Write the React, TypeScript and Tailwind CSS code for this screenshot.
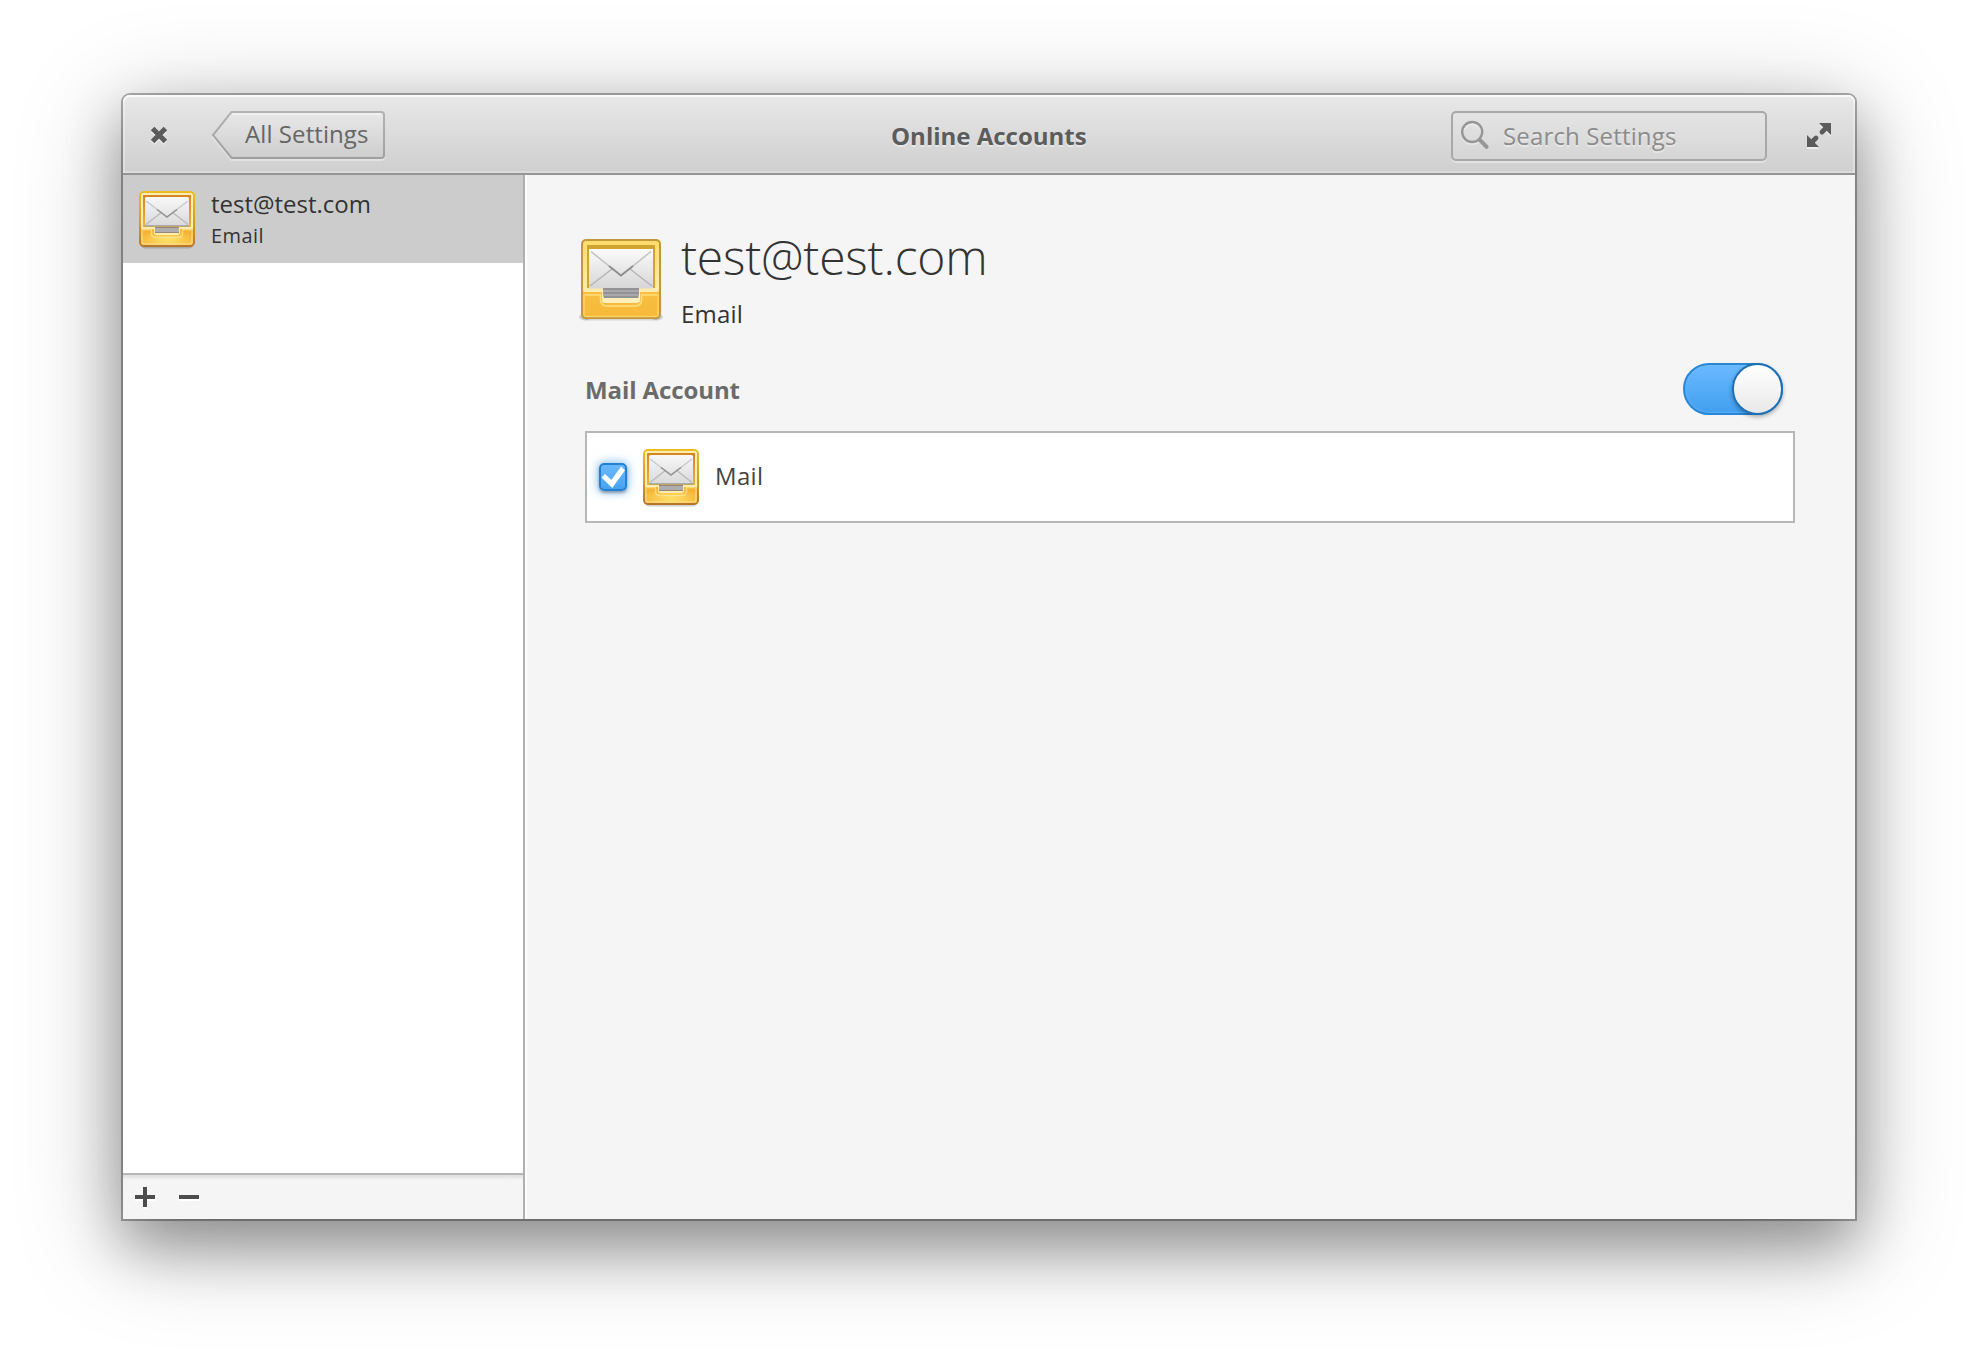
import React from "react";

function SmallMailIcon({ id }: { id: string }) {
  return (
    <svg width="64" height="64" viewBox="0 0 64 64" className="block shrink-0">
      <defs>
        <linearGradient id={id + "b"} x1="0" y1="0" x2="0" y2="1">
          <stop offset="0" stopColor="#eebb20" />
          <stop offset="0.6" stopColor="#d79a1c" />
          <stop offset="1" stopColor="#b8742a" />
        </linearGradient>
        <linearGradient id={id + "w"} x1="0" y1="0" x2="0" y2="1">
          <stop offset="0" stopColor="#d78420" />
          <stop offset="1" stopColor="#e8b33c" />
        </linearGradient>
        <radialGradient id={id + "f"} cx="0.5" cy="0.7" r="0.6">
          <stop offset="0" stopColor="#ffe16b" />
          <stop offset="1" stopColor="#f6b333" />
        </radialGradient>
        <linearGradient id={id + "p"} x1="0" y1="0" x2="0" y2="1">
          <stop offset="0" stopColor="#f8f8f8" />
          <stop offset="1" stopColor="#d9d9d9" />
        </linearGradient>
      </defs>
      <rect x="5" y="6" width="54" height="55.5" rx="5" fill="#000" opacity="0.18" />
      <rect x="4" y="4" width="56" height="56" rx="5" fill={`url(#${id}b)`} />
      <rect x="6" y="6" width="52" height="52" rx="3" fill="#f9c440" />
      <rect x="6" y="42" width="52" height="16" rx="2.5" fill={`url(#${id}f)`} />
      <path d="M6 8.500a2.500 2.500 0 0 1 2.500-2.500h47a2.500 2.500 0 0 1 2.500 2.500V42H6z" fill="#ffedb0" />
      <rect x="8" y="8" width="48" height="32" fill={`url(#${id}w)`} />
      <path d="M19 40h26v5a3 3 0 0 1-3 3h-20a3 3 0 0 1-3-3z" fill="#ffedb0" />
      <rect x="10" y="10" width="44" height="29" rx="1.500" fill={`url(#${id}p)`} />
      <path d="M11 37.500 27 25M53 37.500 37 25" stroke="#b9b9b9" strokeWidth="1.300" />
      <path d="m11 14 21 16 21-16" fill="none" stroke="#c9c9c9" strokeWidth="1.300" />
      <path d="m22 22.500 10 7.500 10-7.500" fill="none" stroke="#939393" strokeWidth="1.500" />
      <path d="M10 38.800h44" stroke="#9b9b9b" strokeWidth="1.200" />
      <path d="M20 40h24v6h-24z" fill="#aeaeae" />
      <path d="M20 40h24v1h-24zM20 45h24v1h-24z" fill="#958678" />
      <path d="M8 42.500h8.500v4a4 4 0 0 0 4 4h23a4 4 0 0 0 4-4v-4h8.500" fill="none" stroke="#fff0a8" strokeOpacity="0.6" strokeWidth="1.600" />
      <rect x="7" y="7" width="50" height="50" rx="2.500" fill="none" stroke="#fff3b8" strokeOpacity="0.5" strokeWidth="1.500" />
    </svg>
  );
}

function LargeMailIcon() {
  return (
    <svg width="96" height="96" viewBox="0 0 96 96" className="block shrink-0">
      <defs>
        <linearGradient id="lgf" x1="0" y1="0" x2="0" y2="1">
          <stop offset="0" stopColor="#fbcb4c" />
          <stop offset="1" stopColor="#f7b93a" />
        </linearGradient>
        <linearGradient id="lgt" x1="0" y1="0" x2="0" y2="1">
          <stop offset="0" stopColor="#ffdc6c" />
          <stop offset="1" stopColor="#fff0bf" />
        </linearGradient>
        <linearGradient id="lgp" x1="0" y1="0" x2="0" y2="1">
          <stop offset="0" stopColor="#fbfbfb" />
          <stop offset="1" stopColor="#d6d6d6" />
        </linearGradient>
        <radialGradient id="lgs">
          <stop offset="0" stopColor="#000" stopOpacity="0.45" />
          <stop offset="1" stopColor="#000" stopOpacity="0" />
        </radialGradient>
      </defs>
      <rect x="12" y="87" width="72" height="2.500" fill="#000" opacity="0.12" />
      <ellipse cx="12" cy="86" rx="7" ry="4" fill="url(#lgs)" />
      <ellipse cx="84" cy="86" rx="7" ry="4" fill="url(#lgs)" />
      <rect x="8" y="8" width="80" height="80" rx="5" fill="#c5973c" />
      <rect x="10" y="10" width="76" height="76" rx="3.500" fill="url(#lgf)" />
      <path d="M10 13.500A3.500 3.500 0 0 1 13.500 10h69a3.500 3.500 0 0 1 3.500 3.500V59a2 2 0 0 1-2 2H67v8a3 3 0 0 1-3 3H32a3 3 0 0 1-3-3v-8H12a2 2 0 0 1-2-2z" fill="url(#lgt)" />
      <path d="M12 64h15.500v5.500a5.500 5.500 0 0 0 5.500 5.500h30a5.500 5.500 0 0 0 5.500-5.500V64h15.500" fill="none" stroke="#ffdf80" strokeWidth="1.500" />
      <path d="M11 63v20.500a2 2 0 0 0 2 2h70a2 2 0 0 0 2-2V63" fill="none" stroke="#ffdb76" strokeOpacity="0.7" strokeWidth="1.500" />
      <rect x="14" y="14" width="68" height="43" fill="#d1a32f" />
      <rect x="16" y="18" width="64" height="39.500" fill="url(#lgp)" />
      <path d="m17 55 22-17M79 55 57 38" stroke="#b5b5b5" strokeWidth="1.500" />
      <path d="m18 20.500 30 24 30-24" fill="none" stroke="#c2c2c2" strokeWidth="1.500" />
      <path d="m36 35 12 9.500L60 35" fill="none" stroke="#8f8f8f" strokeWidth="1.800" />
      <path d="M30 57h36v8a2 2 0 0 1-2 2H32a2 2 0 0 1-2-2z" fill="#a9a9ab" />
      <path d="M30 58h36M30 62h36M31 66h34" stroke="#8c8c90" strokeWidth="1.500" />
    </svg>
  );
}

export default function App() {
  return (
    <div className="flex h-[1370px] w-[1978px] overflow-hidden bg-white px-[123px] pt-[95px] font-['Open_Sans',sans-serif] text-2xl/8 text-[#333]">
      <div className="flex h-[1124px] w-[1732px] flex-col rounded-t-[7px] bg-[#f5f5f5] shadow-[0_0_0_2px_rgba(0,0,0,0.3),0_26px_56px_2px_rgba(0,0,0,0.3),0_20px_104px_2px_rgba(0,0,0,0.27)]">
        <header className="flex h-20 shrink-0 rounded-t-[7px] border-b-2 border-[#959595] bg-linear-to-b from-[#e8e8e8] to-[#cfcfcf] text-[#666] shadow-[inset_0_2px_0_#fafafa,inset_2px_0_0_rgba(255,255,255,0.3),inset_-2px_0_0_rgba(255,255,255,0.3),inset_0_-2px_0_rgba(255,255,255,0.25)] [text-shadow:0_2px_0_rgba(255,255,255,0.4)]">
          <button className="mt-8 ml-7 h-4 w-4">
            <svg width="16" height="16" viewBox="0 0 16 16" className="block overflow-visible">
              <path d="m1.800 3.800 12.400 12.400M14.200 3.800 1.800 16.200" stroke="#fff" strokeOpacity="0.45" strokeWidth="5.200" />
              <path d="m1.600 1.600 12.800 12.800M14.400 1.600 1.600 14.400" stroke="#5b5b5b" strokeWidth="5" />
            </svg>
          </button>
          <button className="relative mt-4 ml-11 h-12 w-[174px] text-left">
            <svg width="176" height="52" viewBox="0 0 176 52" className="absolute top-0 left-0">
              <defs>
                <linearGradient id="btn" x1="0" y1="0" x2="0" y2="1">
                  <stop offset="0" stopColor="#e9e9e9" />
                  <stop offset="1" stopColor="#cdcdcd" />
                </linearGradient>
                <linearGradient id="bst" x1="0" y1="0" x2="0" y2="1">
                  <stop offset="0" stopColor="#b3b3b3" />
                  <stop offset="1" stopColor="#a0a0a0" />
                </linearGradient>
              </defs>
              <path d="M20.500 3H170a3 3 0 0 1 3 3v40a3 3 0 0 1-3 3H20.500L2 26z" fill="none" stroke="#fff" strokeOpacity="0.35" strokeWidth="2" />
              <path d="M20.500 1H170a3 3 0 0 1 3 3v40a3 3 0 0 1-3 3H20.500L2 24z" fill="url(#btn)" stroke="url(#bst)" strokeWidth="2" />
              <path d="M21 3H170" stroke="#fff" strokeOpacity="0.4" strokeWidth="2" />
            </svg>
            <span className="relative block h-12 pt-[7px] pl-[34px] tracking-[0.08px] whitespace-nowrap">All Settings</span>
          </button>
          <h1 className="mt-[25px] flex-1 pl-[506px] font-bold text-[#5c5c5c]">Online Accounts</h1>
          <label className="mt-4 flex h-[50px] w-[316px] rounded-[5px] border-2 border-[#a8a8a8] bg-white/5 text-[#8c8c8c] shadow-[0_2px_0_rgba(255,255,255,0.35)]">
            <svg width="32" height="32" viewBox="0 0 32 32" className="mt-[7px] ml-1.5 block">
              <circle cx="13.200" cy="14" r="10" fill="none" stroke="#fff" strokeOpacity="0.4" strokeWidth="2" />
              <circle cx="13.200" cy="12" r="10" fill="none" stroke="#969696" strokeWidth="2.400" />
              <path d="m20.800 19.800 6.800 7" stroke="#969696" strokeWidth="4" strokeLinecap="round" />
            </svg>
            <span className="mt-[7px] ml-3 tracking-[0.15px]">Search Settings</span>
          </label>
          <button className="mt-7 mr-6 ml-10 h-6 w-6">
            <svg width="24" height="24" viewBox="0 0 24 24" className="block overflow-visible">
              <path d="M12 2h12v12zM0 14v12h12z" fill="#fff" fillOpacity="0.5" />
              <path d="M12 0h12v12zM0 12v12h12z" fill="#5b5b5b" />
              <path d="m20 4-5 5M4 20l5-5" stroke="#5b5b5b" strokeWidth="4.800" strokeLinecap="round" />
            </svg>
          </button>
        </header>
        <div className="flex min-h-0 flex-1">
          <aside className="flex w-[402px] shrink-0 flex-col border-r-2 border-[#afafaf] bg-white">
            <div className="flex h-22 bg-[#ccc] pt-3 pl-3">
              <SmallMailIcon id="s" />
              <div className="mt-px ml-3">
                <div>test@test.com</div>
                <div className="text-xl/8 tracking-[0.4px]">Email</div>
              </div>
            </div>
            <div className="flex-1" />
            <footer className="flex h-[46px] gap-6 border-t-2 border-[#b7b7b7] bg-linear-to-b from-[#dedede] to-[#f5f5f5] to-[5px] pt-3 pl-3">
              <svg width="20" height="22" viewBox="0 0 20 22">
                <path d="M0 10h20v4H0zM8 2h4v20H8z" fill="#fff" />
                <path d="M0 8h20v4H0zM8 0h4v20H8z" fill="#4d4d4d" />
              </svg>
              <svg width="20" height="22" viewBox="0 0 20 22">
                <path d="M0 10h20v4H0z" fill="#fff" />
                <path d="M0 8h20v4H0z" fill="#4d4d4d" />
              </svg>
            </footer>
          </aside>
          <main className="flex-1 border-l-2 border-white pr-[60px] pl-[46px]">
            <div className="mt-14 flex h-24">
              <LargeMailIcon />
              <div className="ml-3">
                <div className="-mt-1.5 text-5xl/[64px] font-light tracking-[-0.2px]">test@test.com</div>
                <div className="mt-[9px] tracking-[0.2px]">Email</div>
              </div>
            </div>
            <div className="mt-9 flex h-[52px] items-center justify-between pr-3 pl-3">
              <h2 className="pt-0.5 font-bold tracking-[-0.1px] text-[#6b6b6b]">Mail Account</h2>
              <div className="flex h-[52px] w-[100px] justify-end overflow-visible rounded-full border-2 border-[#2a86d6] bg-linear-to-b from-[#69b9ff] to-[#419fef] shadow-[inset_0_0_2px_1px_rgba(120,190,255,0.5)]">
                <div className="-mt-0.5 -mr-0.5 h-[52px] w-[51px] rounded-full border-2 border-[#1f6fb5] bg-linear-to-b from-white to-[#e9e9e9] shadow-[0_2px_4px_rgba(0,0,0,0.3)]" />
              </div>
            </div>
            <div className="mt-4 ml-3 flex h-[92px] items-center border-2 border-[#b7b7b7] bg-white pl-3">
              <div className="h-7 w-7 rounded-[5px] border-2 border-[#2480d0] bg-linear-to-b from-[#6ab8fc] to-[#46a3f0] shadow-[0_2px_3px_rgba(0,0,0,0.3),0_0_8px_2px_rgba(74,163,240,0.55)]">
                <svg width="24" height="24" viewBox="0 0 24 24" className="block overflow-visible">
                  <path d="M.5 12.500 4 9l6.300 6L20 1.700l4 3.500L11.300 23z" fill="#fff" />
                </svg>
              </div>
              <div className="ml-3">
                <SmallMailIcon id="m" />
              </div>
              <span className="mb-0.5 ml-3 tracking-[0.3px] text-[#444]">Mail</span>
            </div>
          </main>
        </div>
      </div>
    </div>
  );
}
